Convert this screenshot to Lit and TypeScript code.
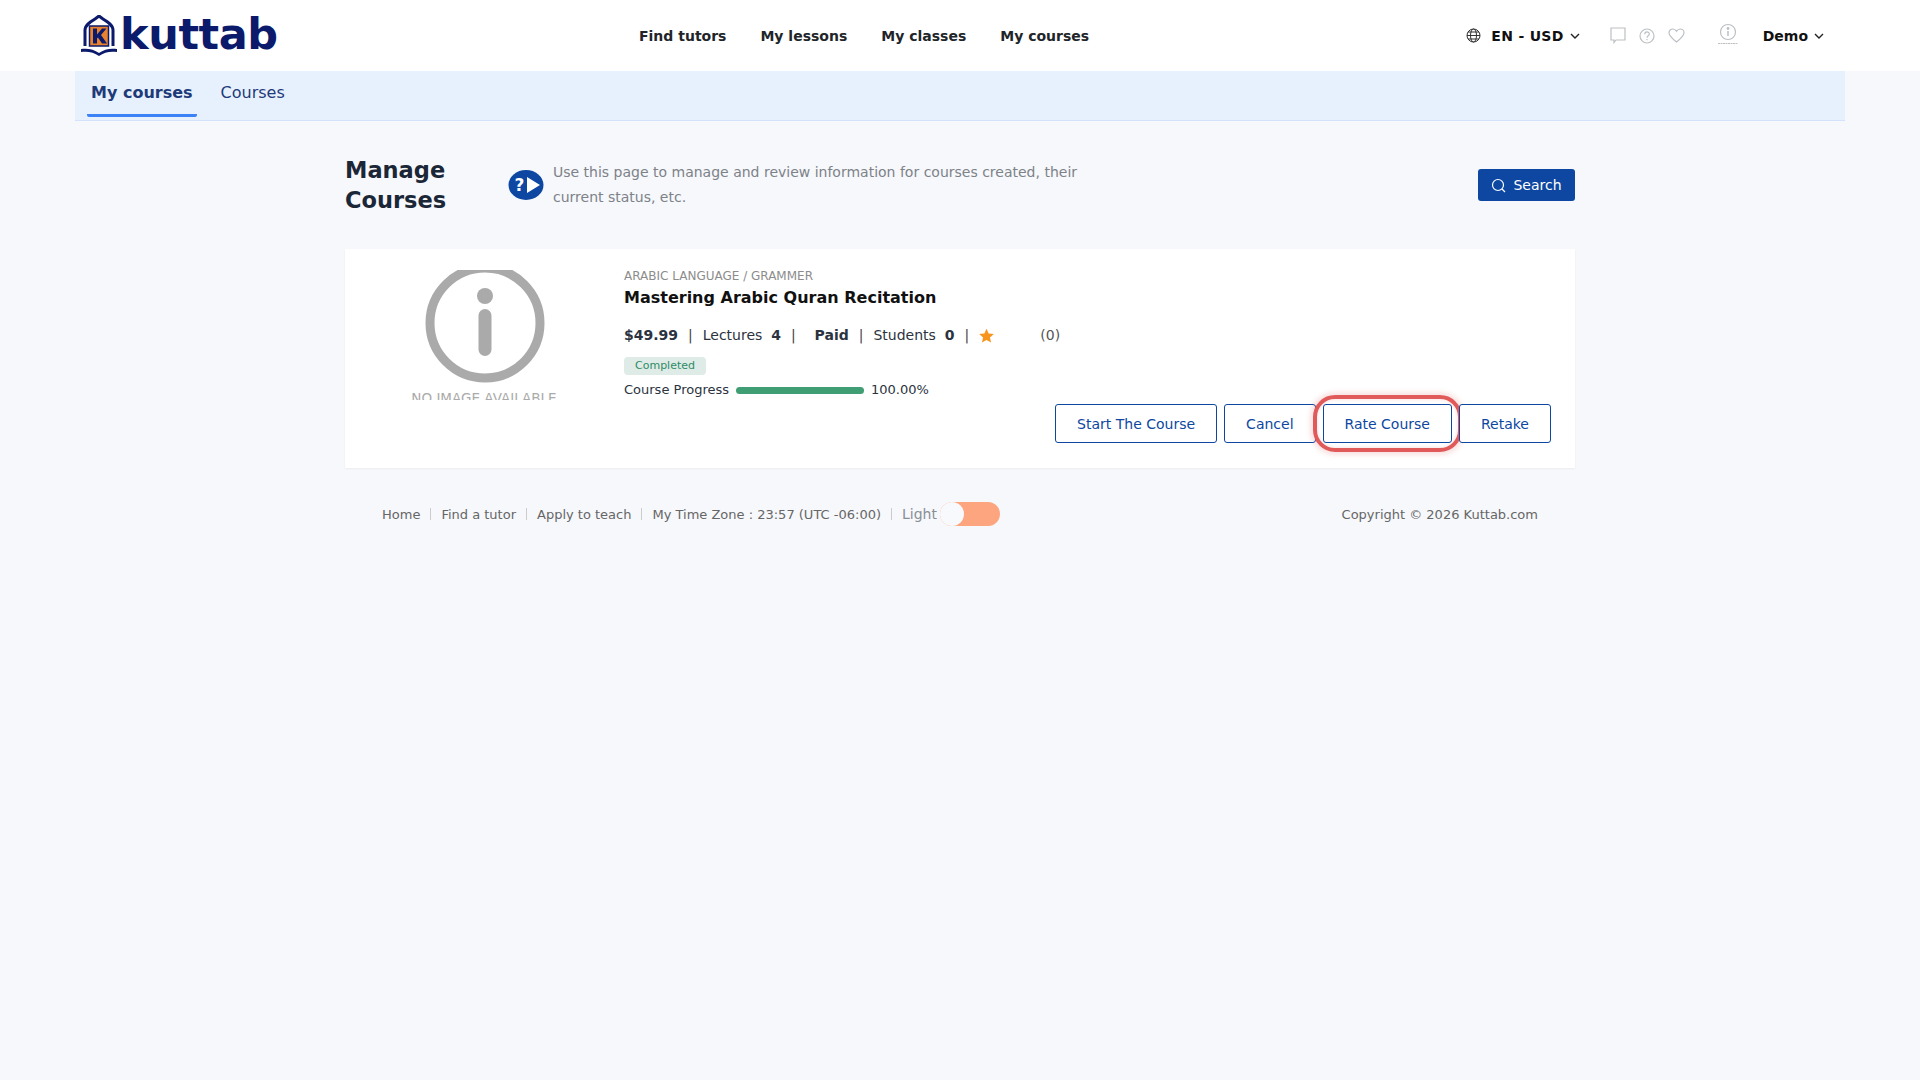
import { LitElement, html, css, svg } from "lit";
import { customElement } from "lit/decorators.js";

const chevron = html`<svg class="chev" viewBox="0 0 10 6" width="10" height="6" fill="none" stroke="#222" stroke-width="1.4"><path d="M1 1l4 4 4-4"/></svg>`;

const logoMark = svg`
  <path d="M6 31V15c0-5 5-8 10-11l4-3 4 3c5 3 10 6 10 11v16" fill="#fff" stroke="#0b1a6b" stroke-width="3"/>
  <rect x="10.500" y="11" width="19" height="20" fill="#e8822e" stroke="#0b1a6b" stroke-width="1.500"/>
  <path d="M14 13.500h4v6l5-6h4.500l-5.500 6.500 6 8.500h-5l-4-6-1 1v5h-4z" fill="#0b1a6b"/>
  <path d="M2 34c6-1 13 0 18 4 5-4 12-5 18-4v3c-6-1-13 0-18 4-5-4-12-5-18-4z" fill="#0b1a6b"/>`;

@customElement("app-root")
export class AppRoot extends LitElement {
  static styles = css`
    :host {
      display: block;
      min-height: 1080px;
      background: #f6f8fc;
      font-family: "DejaVu Sans", sans-serif;
      color: #212529;
      font-size: 14px;
    }
    svg { display: block; flex-shrink: 0; }

    .top {
      height: 71px;
      background: #fff;
      display: flex;
      align-items: center;
      padding: 0 75px 0 79px;
      position: relative;
    }
    .logo {
      width: 560px;
      display: flex;
      align-items: center;
      gap: 0;
    }
    .logo span {
      font-size: 43px;
      font-weight: 700;
      color: #0b1a6b;
      line-height: 1;
      margin-left: 1px;
      margin-top: -2px;
      letter-spacing: -0.4px;
    }
    .menu {
      display: flex;
      gap: 34px;
      font-weight: 700;
      color: #212529;
    }
    .right {
      margin-left: auto;
      display: flex;
      align-items: center;
      font-weight: 700;
      color: #111;
      padding-right: 21px;
    }
    .lang { display: flex; align-items: center; }
    .lang b { margin: 0 6px 0 10px; letter-spacing: 0.3px; }
    .icons { display: flex; align-items: center; gap: 13px; margin-left: 30px; }
    .avatar { margin: -4px 0 0 32px; }
    .demo { display: flex; align-items: center; gap: 6px; margin-left: 24px; }

    .tabs {
      margin: 0 75px;
      height: 50px;
      background: #e7f1fe;
      border-bottom: 1px solid #d3e3fb;
      display: flex;
      padding-left: 12px;
      box-sizing: border-box;
      gap: 20px;
      color: #1e3a78;
      font-size: 16px;
    }
    .tab {
      height: 43px;
      padding: 0 4px;
      display: flex;
      align-items: center;
      border-bottom: 3px solid transparent;
      border-radius: 0 0 2px 2px;
      box-sizing: content-box;
    }
    .tab.active {
      font-weight: 700;
      border-bottom-color: #3b82f6;
    }

    main { width: 1230px; margin: 0 auto; padding-left: 0; }

    .head {
      display: flex;
      align-items: center;
      height: 128px;
      padding-bottom: 0;
    }
    h1 {
      margin: 0;
      width: 163px;
      font-size: 22.500px;
      line-height: 30px;
      font-weight: 700;
      color: #1b2737;
    }
    .desc {
      width: 530px;
      margin-left: 9px;
      color: #7d8288;
      line-height: 25px;
    }
    .help { margin-left: 0; }
    .search {
      margin-left: auto;
      height: 32px;
      width: 97px;
      background: #0d47a1;
      color: #fff;
      border-radius: 3px;
      display: flex;
      align-items: center;
      justify-content: center;
      gap: 7px;
      font-size: 14px;
    }

    .card {
      background: #fff;
      height: 219px;
      box-shadow: 0 1px 2px rgba(0, 0, 0, 0.05);
      display: flex;
      position: relative;
    }
    .thumb {
      width: 279px;
      height: 130px;
      margin-top: 21px;
      overflow: hidden;
      display: flex;
      flex-direction: column;
      align-items: center;
      flex-shrink: 0;
    }
    .thumb svg { margin-top: -7px; }
    .thumb span {
      color: #aaa;
      font-size: 13.500px;
      margin-top: 7px;
      margin-left: -1px;
      white-space: nowrap;
    }
    .info { padding-top: 20px; flex: 1; }
    .cat { font-size: 12px; color: #8c8c8c; line-height: 15px; }
    .name { font-size: 16px; font-weight: 700; color: #111; line-height: 20px; margin-top: 4px; }
    .meta {
      display: flex;
      align-items: center;
      margin-top: 17px;
      height: 20px;
      color: #2b3340;
    }
    .meta i { font-style: normal; margin: 0 10px; color: #444; }
    .meta b { font-weight: 700; }
    .count { margin-left: 46px; color: #555; }
    .badge {
      display: inline-block;
      margin-top: 12px;
      background: #deebe6;
      color: #2e8b66;
      font-size: 11px;
      line-height: 18px;
      padding: 0 11px;
      border-radius: 4px;
    }
    .progress {
      display: flex;
      align-items: center;
      gap: 7px;
      margin-top: 5px;
      font-size: 13px;
      color: #2b3340;
      line-height: 20px;
    }
    .bar { width: 128px; height: 7px; background: #3f9e74; border-radius: 4px; }

    .actions {
      position: absolute;
      right: 24px;
      bottom: 25px;
      display: flex;
      gap: 7px;
    }
    .btn {
      position: relative;
      height: 39px;
      box-sizing: border-box;
      border: 1px solid #0d47a1;
      border-radius: 3px;
      color: #0d47a1;
      background: #fff;
      display: flex;
      align-items: center;
      padding: 0 21px;
    }
    .ring {
      position: absolute;
      left: -11px;
      right: -11px;
      top: -10px;
      bottom: -10px;
      border: 4px solid #e05a5a;
      border-radius: 22px;
      box-shadow: 0 0 5px 3px rgba(224, 90, 90, 0.18), inset 0 0 3px 1px rgba(224, 90, 90, 0.15);
    }

    footer {
      display: flex;
      align-items: center;
      height: 24px;
      margin-top: 34px;
      padding: 0 37px;
      font-size: 13px;
      color: #666;
    }
    footer .sep { width: 1px; height: 12px; background: #ccc; margin: 0 10px; }
    .light { color: #8a8f96; font-size: 14px; }
    .toggle {
      width: 60px;
      height: 24px;
      border-radius: 12px;
      background: #fca57e;
      margin-left: 3px;
      position: relative;
    }
    .toggle::after {
      content: "";
      position: absolute;
      left: 0;
      top: 0;
      width: 24px;
      height: 24px;
      border-radius: 50%;
      background: #f8f9fc;
    }
    .copy { margin-left: auto; }
  `;

  render() {
    return html`
      <header class="top">
        <div class="logo">
          <svg width="40" height="42" viewBox="0 0 40 42">${logoMark}</svg>
          <span>kuttab</span>
        </div>
        <nav class="menu">
          <span>Find tutors</span><span>My lessons</span><span>My classes</span><span>My courses</span>
        </nav>
        <div class="right">
          <div class="lang">
            <svg width="15" height="15" viewBox="0 0 15 15" fill="none" stroke="#333" stroke-width="1"><circle cx="7.500" cy="7.500" r="6.500"/><ellipse cx="7.500" cy="7.500" rx="3" ry="6.500"/><path d="M1 7.500h13M2 4h11M2 11h11"/></svg>
            <b>EN - USD</b>${chevron}
          </div>
          <div class="icons">
            <svg width="16" height="17" viewBox="0 0 16 17" fill="none" stroke="#bcc0c4" stroke-width="1.200"><path d="M1 1h14v12H6l-2 2.500V13H1z"/></svg>
            <svg width="16" height="16" viewBox="0 0 16 16" fill="none" stroke="#bcc0c4" stroke-width="1.200"><circle cx="8" cy="8" r="7"/><path d="M5.800 6.200c0-3 4.500-3 4.500-.2 0 1.800-2.300 1.800-2.300 3.700"/><path d="M8 11v1.300"/></svg>
            <svg width="17" height="15" viewBox="0 0 17 15" fill="none" stroke="#bcc0c4" stroke-width="1.200"><path d="M8.500 14C4 10.500 1 8 1 4.800 1 2.500 2.800 1 4.700 1c1.600 0 3 .9 3.800 2.300C9.300 1.900 10.700 1 12.300 1 14.200 1 16 2.500 16 4.800 16 8 13 10.500 8.500 14z"/></svg>
          </div>
          <svg class="avatar" width="22" height="22" viewBox="0 0 22 22" fill="none" stroke="#bcc0c4" stroke-width="1.200"><circle cx="11" cy="9" r="7.500"/><circle cx="11" cy="5.500" r=".8" fill="#bcc0c4"/><path d="M11 8v5" stroke-width="1.500"/><path d="M1 20.500h20" stroke-width="1" stroke-dasharray="2 .5"/></svg>
          <div class="demo"><span>Demo</span>${chevron}</div>
        </div>
      </header>

      <div class="tabs">
        <div class="tab active">My courses</div>
        <div class="tab">Courses</div>
      </div>

      <main>
        <section class="head">
          <h1>Manage Courses</h1>
          <svg class="help" width="36" height="30" viewBox="0 0 36 30"><ellipse cx="18" cy="15" rx="17.500" ry="15" fill="#0d47a1"/><path d="M19 7l13 8-13 8z" fill="#fff"/><text x="6.500" y="21" font-size="17" font-weight="700" fill="#fff" font-family="DejaVu Sans">?</text></svg>
          <div class="desc">Use this page to manage and review information for courses created, their current status, etc.</div>
          <div class="search">
            <svg width="15" height="15" viewBox="0 0 15 15" fill="none" stroke="#fff" stroke-width="1.200"><circle cx="7" cy="7" r="5.500"/><path d="M11 11l3 3"/></svg>
            Search
          </div>
        </section>

        <section class="card">
          <div class="thumb">
            <svg width="120" height="120" viewBox="0 0 120 120"><circle cx="60" cy="60" r="55" fill="none" stroke="#aaa" stroke-width="9"/><circle cx="60" cy="33" r="8" fill="#aaa"/><rect x="53.500" y="46" width="13" height="47" rx="6.500" fill="#aaa"/></svg>
            <span>NO IMAGE AVAILABLE</span>
          </div>
          <div class="info">
            <div class="cat">ARABIC LANGUAGE / GRAMMER</div>
            <div class="name">Mastering Arabic Quran Recitation</div>
            <div class="meta">
              <b>$49.99</b><i>|</i><span>Lectures&nbsp; <b>4</b></span><i>|</i>&nbsp;&nbsp;<b>Paid</b><i>|</i><span>Students&nbsp; <b>0</b></span><i>|</i>
              <svg width="15" height="15" viewBox="0 0 24 24" fill="#f7941d"><path d="M12 1l3.400 7.600 8.300.9-6.200 5.500 1.800 8.200L12 19l-7.300 4.200 1.800-8.200L.3 9.500l8.300-.9z"/></svg>
              <span class="count">(0)</span>
            </div>
            <span class="badge">Completed</span>
            <div class="progress"><span>Course Progress</span><div class="bar"></div><span>100.00%</span></div>
          </div>
          <div class="actions">
            <div class="btn">Start The Course</div>
            <div class="btn">Cancel</div>
            <div class="btn">Rate Course<div class="ring"></div></div>
            <div class="btn">Retake</div>
          </div>
        </section>

        <footer>
          <span>Home</span><span class="sep"></span>
          <span>Find a tutor</span><span class="sep"></span>
          <span>Apply to teach</span><span class="sep"></span>
          <span>My Time Zone : 23:57 (UTC -06:00)</span><span class="sep"></span>
          <span class="light">Light</span>
          <div class="toggle"></div>
          <span class="copy">Copyright © 2026 Kuttab.com</span>
        </footer>
      </main>
    `;
  }
}
